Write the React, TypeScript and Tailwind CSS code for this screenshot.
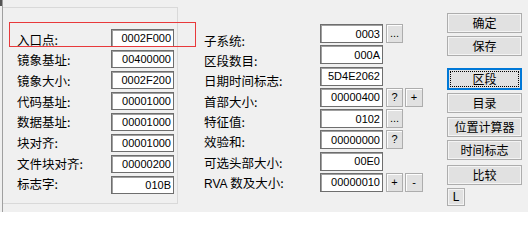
import React from 'react';

const CJK = '"Noto Sans CJK SC", "Liberation Sans", sans-serif';
const LATIN = '"Liberation Sans", Arial, sans-serif';

const leftRows = [
  { label: '入口点:', value: '0002F000' },
  { label: '镜象基址:', value: '00400000' },
  { label: '镜象大小:', value: '0002F200' },
  { label: '代码基址:', value: '00001000' },
  { label: '数据基址:', value: '00001000' },
  { label: '块对齐:', value: '00001000' },
  { label: '文件块对齐:', value: '00000200' },
  { label: '标志字:', value: '010B' },
];

const midRows = [
  { label: '子系统:', value: '0003', buttons: ['...'] },
  { label: '区段数目:', value: '000A', buttons: [] },
  { label: '日期时间标志:', value: '5D4E2062', buttons: [] },
  { label: '首部大小:', value: '00000400', buttons: ['?', '+'] },
  { label: '特征值:', value: '0102', buttons: ['...'] },
  { label: '效验和:', value: '00000000', buttons: ['?'] },
  { label: '可选头部大小:', value: '00E0', buttons: [] },
  { label: 'RVA 数及大小:', value: '00000010', buttons: ['+', '-'] },
];

function HexBox({ value, tall }: { value: string; tall?: boolean }) {
  return (
    <div
      className={`w-[63px] ${tall ? 'h-[19px]' : 'h-[18px]'} bg-white border border-[#6e6e6e] shadow-[inset_1px_1px_0_#a0a0a0] flex items-center justify-end pr-[2px] pt-[1px] text-[11px] text-black leading-none`}
      style={{ fontFamily: LATIN }}
    >
      {value}
    </div>
  );
}

function SmallButton({ text, wide }: { text: string; wide?: boolean }) {
  return (
    <div
      className={`${wide ? 'w-[18px]' : 'w-[17px]'} h-[19px] bg-[#e1e1e1] border border-[#adadad] shadow-[inset_1px_1px_0_#fdfdfd] flex items-center justify-center text-[11px] text-black leading-none`}
      style={{ fontFamily: LATIN }}
    >
      {text}
    </div>
  );
}

function SideButton({ text, focused, className = '' }: { text: string; focused?: boolean; className?: string }) {
  if (focused) {
    return (
      <div className={`w-[75px] h-[22px] border-2 border-[#0078d7] bg-[#e1e1e1] p-[1px] ${className}`}>
        <div className="w-full h-full border border-dotted border-black flex items-center justify-center text-[12px] text-black leading-none">
          {text}
        </div>
      </div>
    );
  }
  return (
    <div
      className={`w-[75px] h-[20px] bg-[#e1e1e1] border border-[#adadad] shadow-[inset_0_0_0_1px_#f4f4f4] flex items-center justify-center text-[12px] text-black leading-none ${className}`}
    >
      {text}
    </div>
  );
}

export default function App() {
  return (
    <div
      className="relative w-[528px] h-[212px] bg-[#f0f0f0] overflow-hidden flex"
      style={{ fontFamily: CJK }}
    >
      {/* cut-off glyph at the corner */}
      <span className="absolute left-0 top-0 w-[2px] h-[6px] bg-[#555]" />

      <div className="w-[2px]" />
      <div className="w-px h-full bg-[#a0a0a0]" />

      {/* header group box */}
      <div className="mt-[7px] w-[175px] h-[197px] border-t border-r border-b border-[#d9d9d9] flex">
        <div className="pl-[14px] w-[108px] pt-[21.6px] flex flex-col">
          {leftRows.map((r) => (
            <div key={r.label} className="h-[20.7px] leading-[20.7px] text-[12.5px] text-black whitespace-nowrap">
              {r.label}
            </div>
          ))}
        </div>
        <div className="pt-[21px] flex flex-col gap-[3px]">
          {leftRows.map((r) => (
            <HexBox key={r.label} value={r.value} />
          ))}
        </div>
      </div>

      {/* optional header fields */}
      <div className="ml-[26px] w-[116px] pt-[30.8px] flex flex-col">
        {midRows.map((r) => (
          <div key={r.label} className="h-[20.3px] leading-[20.3px] text-[12.5px] text-black whitespace-nowrap">
            {r.label.startsWith('RVA') ? (
              <>
                <span style={{ fontFamily: LATIN }} className="text-[12px]">RVA </span>
                {r.label.slice(4)}
              </>
            ) : (
              r.label
            )}
          </div>
        ))}
      </div>
      <div className="mt-[24px] h-[168px] flex flex-col justify-between">
        {midRows.map((r) => (
          <div key={r.label} className="flex items-center">
            <HexBox value={r.value} tall />
            <div className="ml-[3px] flex gap-[2px]">
              {r.buttons.map((b, i) => (
                <SmallButton key={i} text={b} wide={i === 1} />
              ))}
            </div>
          </div>
        ))}
      </div>

      {/* action buttons */}
      <div className="absolute left-[447px] top-[13px] flex flex-col">
        <SideButton text="确定" />
        <SideButton text="保存" className="mt-[3px]" />
        <SideButton text="区段" focused className="mt-[12px]" />
        <SideButton text="目录" className="mt-[3px]" />
        <SideButton text="位置计算器" className="mt-[4px]" />
        <SideButton text="时间标志" className="mt-[3px]" />
        <SideButton text="比较" className="mt-[5px]" />
        <div
          className="mt-[3px] w-[18px] h-[18px] bg-[#e1e1e1] border border-[#adadad] shadow-[inset_0_0_0_1px_#f4f4f4] flex items-center justify-center text-[12px] text-black leading-none"
          style={{ fontFamily: LATIN }}
        >
          L
        </div>
      </div>

      {/* selection highlight */}
      <div className="absolute left-[9px] top-[22px] w-[187px] h-[25px] border border-[#e8393b]" />
    </div>
  );
}
